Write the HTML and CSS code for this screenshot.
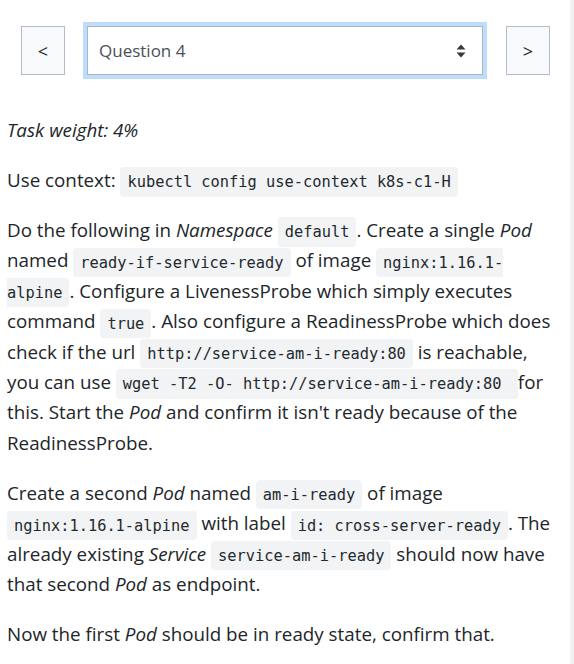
FILE: index.html
```html
<!DOCTYPE html>
<html lang="en">
<head>
<meta charset="utf-8">
<title>Question 4</title>
<link rel="stylesheet" href="styles.css">
</head>
<body>
<div class="page">
  <main class="content">
    <nav class="nav">
      <button class="nav-btn" type="button">&lt;</button>
      <div class="select">
        <span class="select-text">Question 4</span>
        <svg class="select-arrows" width="10" height="14" viewBox="0 0 10 14" aria-hidden="true">
          <path d="M5 0.5 L9.5 5.5 L0.5 5.5 Z" fill="#343a40"/>
          <path d="M5 13.5 L9.5 8.5 L0.5 8.5 Z" fill="#343a40"/>
        </svg>
      </div>
      <button class="nav-btn" type="button">&gt;</button>
    </nav>
    <div class="task">
      <p><em>Task weight: 4%</em></p>
      <p>Use context: <code>kubectl config use-context k8s-c1-H</code></p>
      <p>Do the following in <em>Namespace</em> <code>default</code>. Create a single <em>Pod</em> named <code>ready-if-service-ready</code> of image <code>nginx:1.16.1-alpine</code>. Configure a LivenessProbe which simply executes command <code>true</code>. Also configure a ReadinessProbe which does check if the url <code>http://service-am-i-ready:80</code> is reachable, you can use <code>wget -T2 -O- http://service-am-i-ready:80 </code> for this. Start the <em>Pod</em> and confirm it isn't ready because of the ReadinessProbe.</p>
      <p>Create a second <em>Pod</em> named <code>am-i-ready</code> of image <code>nginx:1.16.1-alpine</code> with label <code>id: cross-server-ready</code>. The already existing <em>Service</em> <code>service-am-i-ready</code> should now have that second <em>Pod</em> as endpoint.</p>
      <p>Now the first <em>Pod</em> should be in ready state, confirm that.</p>
    </div>
  </main>
  <aside class="gutter"></aside>
</div>
</body>
</html>
```
FILE: styles.css
```css
html, body {
  margin: 0;
  padding: 0;
  background: #ffffff;
}
body {
  font-family: "Open Sans", "Noto Sans", sans-serif;
  font-size: 18.8px;
  color: #212529;
}
.page {
  display: flex;
  min-height: 664px;
}
.content {
  flex: 1;
  min-width: 0;
}
.gutter {
  width: 4px;
  background: #f1f1f1;
}
.nav {
  display: flex;
  align-items: center;
  padding: 26px 0 0 21px;
}
.nav-btn {
  width: 44px;
  height: 49px;
  box-sizing: border-box;
  background: #f8f9fa;
  border: 1px solid #b3bdc9;
  border-radius: 0;
  color: #212529;
  font-family: "Open Sans", sans-serif;
  font-size: 18px;
  padding: 0;
}
.select {
  width: 396px;
  height: 49px;
  box-sizing: border-box;
  margin: 0 23px 0 22px;
  border: 1px solid #a9b6c6;
  box-shadow: 0 0 0 4px #bfdcfa;
  background: #fff;
  display: flex;
  align-items: center;
  justify-content: space-between;
  padding: 0 16px 0 11px;
}
.select-text {
  color: #495057;
  font-size: 17px;
}
.select-arrows {
  display: block;
}
.task {
  padding: 40px 8px 0 7px;
}
.task p {
  margin: 0 0 19.6px;
  line-height: 30.4px;
}
code {
  font-family: "DejaVu Sans Mono", monospace;
  font-size: 15.35px;
  line-height: 1;
  background: #f1f3f4;
  border-radius: 4px;
  padding: 5.6px 7px;
  color: #24292e;
}
```
